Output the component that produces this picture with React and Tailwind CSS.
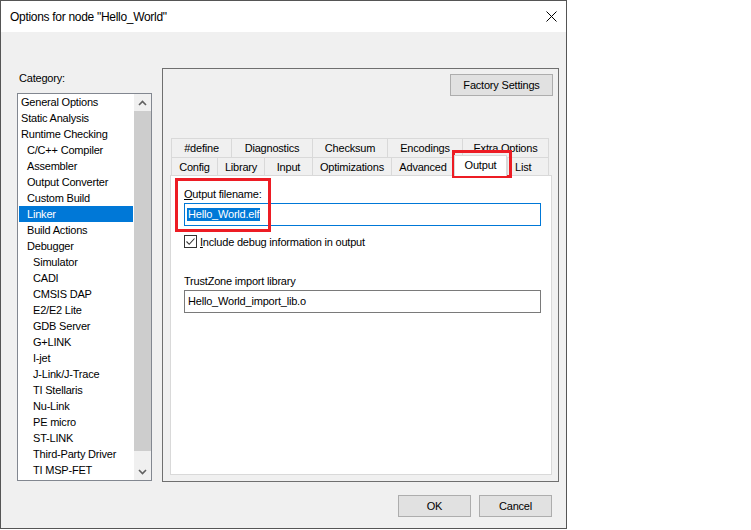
import React from "react";

const items = [
  ["General Options", 0],
  ["Static Analysis", 0],
  ["Runtime Checking", 0],
  ["C/C++ Compiler", 1],
  ["Assembler", 1],
  ["Output Converter", 1],
  ["Custom Build", 1],
  ["Linker", 1, true],
  ["Build Actions", 1],
  ["Debugger", 1],
  ["Simulator", 2],
  ["CADI", 2],
  ["CMSIS DAP", 2],
  ["E2/E2 Lite", 2],
  ["GDB Server", 2],
  ["G+LINK", 2],
  ["I-jet", 2],
  ["J-Link/J-Trace", 2],
  ["TI Stellaris", 2],
  ["Nu-Link", 2],
  ["PE micro", 2],
  ["ST-LINK", 2],
  ["Third-Party Driver", 2],
  ["TI MSP-FET", 2],
];

const row1 = [
  ["#define", "w-[60px] justify-center"],
  ["Diagnostics", "w-[81px] justify-center"],
  ["Checksum", "w-[75px] justify-center"],
  ["Encodings", "w-[75px] justify-center"],
  ["Extra Options", "w-[87px] border-r justify-center"],
];

const row2 = [
  ["Config", "w-[46px] justify-center"],
  ["Library", "w-[47px] justify-center"],
  ["Input", "w-[48px] justify-center"],
  ["Optimizations", "w-[79px] justify-center"],
  ["Advanced", "w-[63px] justify-center"],
  ["Output", "w-[53px]", true],
  ["List", "w-[42px] border-r justify-start pl-[7px]"],
];

function Chevron({ down }) {
  return (
    <svg width="9" height="6" viewBox="0 0 9 6">
      <path
        d={down ? "M1 1 L4.5 4.5 L8 1" : "M1 5 L4.5 1.5 L8 5"}
        fill="none"
        stroke="#606060"
        strokeWidth="1.6"
      />
    </svg>
  );
}

export default function App() {
  return (
    <div
      className="relative w-[751px] h-[530px] bg-white text-black text-[11px] tracking-[-0.2px]"
      style={{ fontFamily: '"Liberation Sans", Arial, sans-serif' }}
    >
      <div className="w-[567px] h-[529px] border border-[#555555] flex flex-col">
        {/* Title bar */}
        <div className="h-[31px] bg-white flex items-center pl-[9px] shrink-0">
          <span className="text-[12px] tracking-[-0.3px] leading-[14px]">
            Options for node "Hello_World"
          </span>
          <svg className="ml-auto mr-[9px]" width="11" height="11" viewBox="0 0 11 11">
            <path d="M0.5 0.5 L10.5 10.5 M10.5 0.5 L0.5 10.5" stroke="#000" strokeWidth="1" />
          </svg>
        </div>
        {/* Body */}
        <div className="flex-1 bg-[#f0f0f0] flex flex-col">
          <div className="flex mt-[36px] pl-[16px]">
            {/* Left column */}
            <div className="w-[135px] flex flex-col">
              <div className="mt-[3px] leading-[14px] pl-[2px]">Category:</div>
              <div className="mt-[8px] h-[388px] border border-[#828790] bg-white flex">
                <div className="w-[116px] px-px flex flex-col">
                  {items.map(([label, lvl, sel]) => (
                    <div
                      key={label}
                      className={
                        "h-[16px] leading-[16px] whitespace-nowrap " +
                        (lvl === 0 ? "pl-[2px] " : lvl === 1 ? "pl-[8px] " : "pl-[14px] ") +
                        (sel ? "bg-[#0078d7] text-white" : "")
                      }
                    >
                      {label}
                    </div>
                  ))}
                </div>
                <div className="w-[17px] flex flex-col bg-[#f0f0f0]">
                  <div className="h-[17px] flex items-center justify-center">
                    <Chevron />
                  </div>
                  <div className="h-[340px] bg-[#cdcdcd]" />
                  <div className="flex-1" />
                  <div className="h-[17px] flex items-center justify-center">
                    <Chevron down />
                  </div>
                </div>
              </div>
            </div>
            {/* Right group box */}
            <div className="ml-[10px] w-[397px] h-[414px] border border-[#6f6f6f] flex flex-col">
              <button className="self-end mr-[5px] mt-[5px] w-[103px] h-[22px] bg-[#e1e1e1] border border-[#adadad] leading-[14px]">
                Factory Settings
              </button>
              <div className="mt-[42px] ml-[7px] w-[382px] flex flex-col">
                <div className="flex pl-px h-[19px]">
                  {row1.map(([t, w]) => (
                    <div
                      key={t}
                      className={"h-[19px] border-l border-t border-[#d9d9d9] flex items-center leading-[14px] " + w}
                    >
                      {t}
                    </div>
                  ))}
                </div>
                <div className="flex pl-px h-[18px]">
                  {row2.map(([t, w, sel]) =>
                    sel ? (
                      <div
                        key={t}
                        className={"relative z-10 -mt-[2px] h-[21px] bg-white border-l border-t border-r border-[#d9d9d9] flex justify-center pt-[2px] leading-[14px] " + w}
                      >
                        {t}
                      </div>
                    ) : (
                      <div
                        key={t}
                        className={"h-[18px] border-l border-t border-[#d9d9d9] flex items-center leading-[14px] " + w}
                      >
                        {t}
                      </div>
                    )
                  )}
                </div>
                <div className="h-[300px] border border-[#d9d9d9] bg-white flex flex-col pl-[13px] pt-[11px]">
                  <div className="leading-[14px]">
                    <span className="underline">O</span>utput filename:
                  </div>
                  <div className="mt-[2px] w-[357px] h-[23px] border border-[#0078d7] flex items-center pl-[2px]">
                    <span className="bg-[#0078d7] text-white leading-[13px] px-px">Hello_World.elf</span>
                  </div>
                  <div className="mt-[9px] flex items-center h-[13px]">
                    <div className="w-[13px] h-[13px] border border-[#333333] bg-white flex items-center justify-center">
                      <svg width="11" height="11" viewBox="0 0 11 11">
                        <path d="M1.5 5.5 L4.2 8.3 L9.5 2.5" fill="none" stroke="#333" strokeWidth="1.1" />
                      </svg>
                    </div>
                    <span className="ml-[3px] leading-[14px]">
                      <span className="underline">I</span>nclude debug information in output
                    </span>
                  </div>
                  <div className="mt-[26px] leading-[14px]">TrustZone import library</div>
                  <div className="mt-[2px] w-[357px] h-[23px] border border-[#7a7a7a] flex items-center pl-[3px]">
                    Hello_World_import_lib.o
                  </div>
                </div>
              </div>
            </div>
          </div>
          {/* Buttons */}
          <div className="flex justify-end gap-[8px] pr-[14px] mt-[13px]">
            <button className="w-[73px] h-[22px] bg-[#e1e1e1] border border-[#adadad] leading-[14px]">OK</button>
            <button className="w-[73px] h-[22px] bg-[#e1e1e1] border border-[#adadad] leading-[14px]">Cancel</button>
          </div>
        </div>
      </div>
      {/* Red highlight boxes */}
      <div className="absolute left-[452px] top-[150px] w-[60px] h-[28px] border-[3px] border-[#ed1c24] pointer-events-none" />
      <div className="absolute left-[175px] top-[178px] w-[96px] h-[54px] border-[3px] border-[#ed1c24] pointer-events-none" />
    </div>
  );
}
